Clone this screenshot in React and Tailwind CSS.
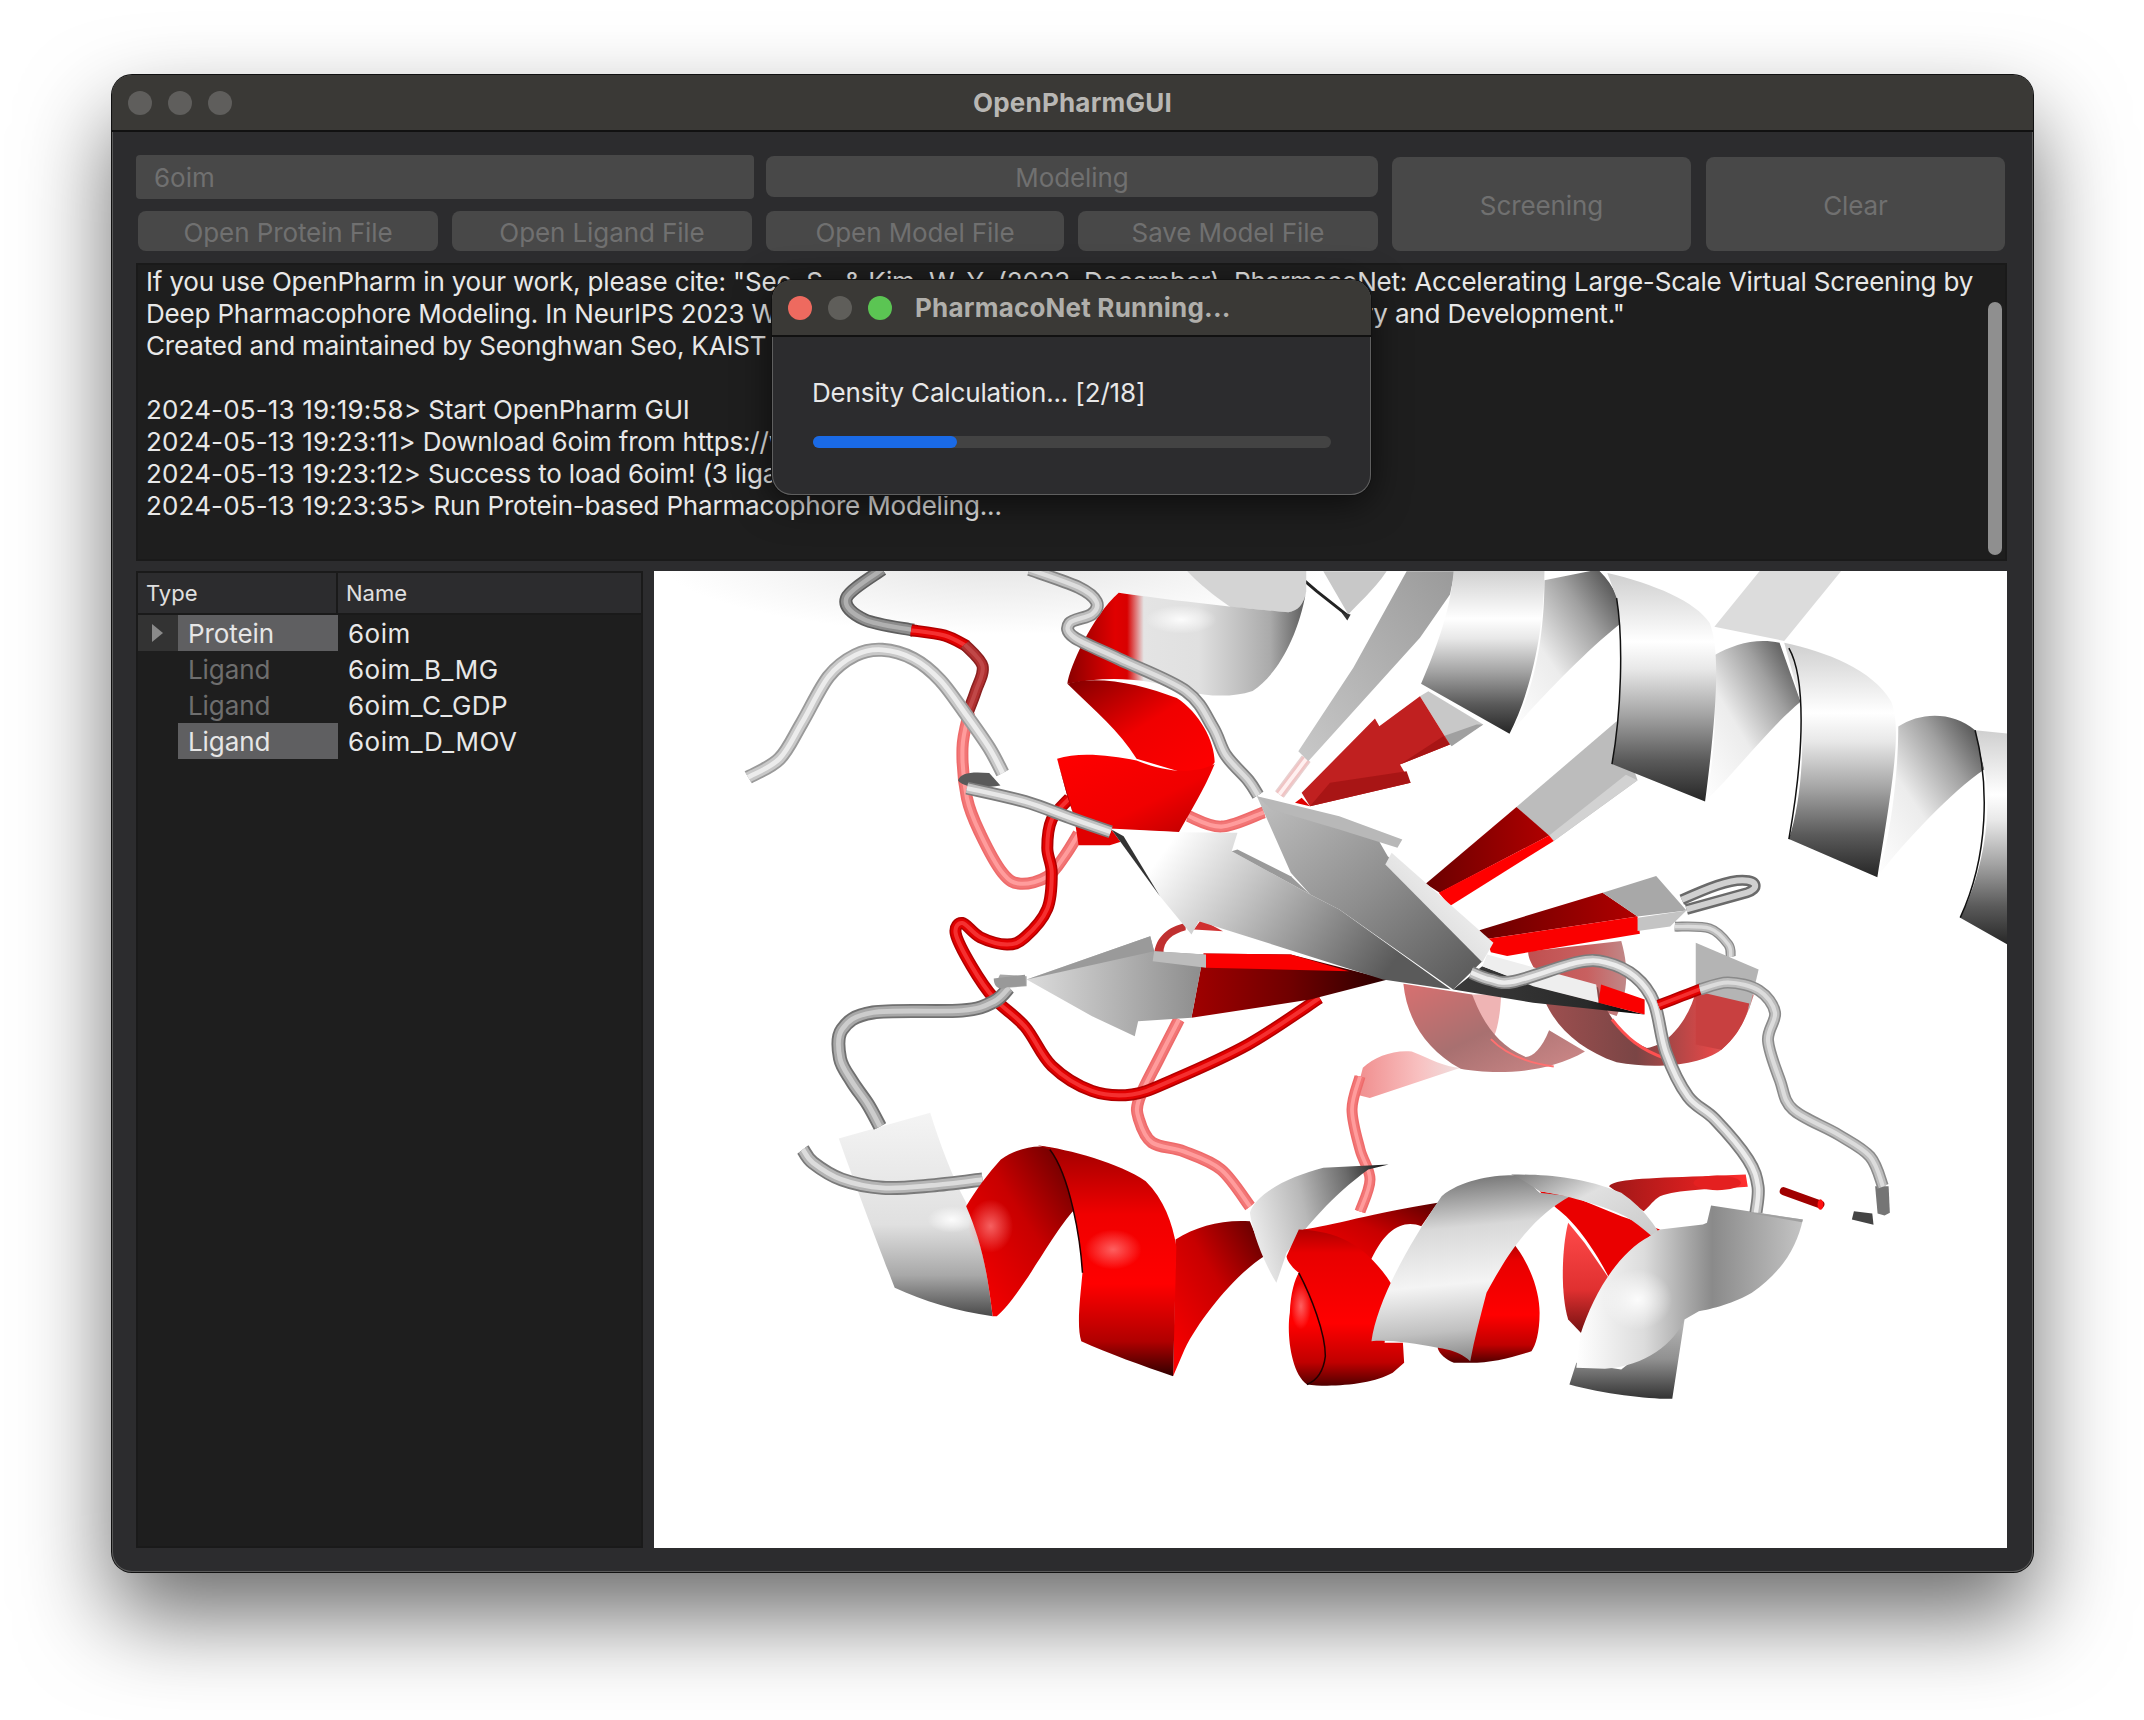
import React from 'react';

// catmull-rom through points, gives smooth tubes
const sm = (p) => {
  let d = `M${p[0][0]},${p[0][1]}`;
  for (let i = 0; i < p.length - 1; i++) {
    const a = p[i - 1] || p[i], b = p[i], c = p[i + 1], e = p[i + 2] || c;
    d += ` C${b[0] + (c[0] - a[0]) / 6},${b[1] + (c[1] - a[1]) / 6} ${c[0] - (e[0] - b[0]) / 6},${c[1] - (e[1] - b[1]) / 6} ${c[0]},${c[1]}`;
  }
  return d;
};

const GRAY = ['#8a8a8a', '#bcbcbc', '#dcdcdc'];
const DGRAY = ['#5e5e5e', '#8c8c8c', '#b0b0b0'];
const RED = ['#b00000', '#e20000', '#f43030'];
const PINK = ['#ee6a6a', '#f27676', '#ff9c9c'];
const DRED = ['#8a2020', '#b03030', '#c04848'];

const Tube = ({ pts, c = GRAY, w = 13, cap = 'butt' }) => (
  <g fill="none" strokeLinecap={cap} strokeLinejoin="round">
    <path d={sm(pts)} stroke={c[0]} strokeWidth={w} vectorEffect="non-scaling-stroke" />
    <path d={sm(pts)} stroke={c[1]} strokeWidth={w * 0.74} vectorEffect="non-scaling-stroke" />
    <path d={sm(pts)} stroke={c[2]} strokeWidth={w * 0.34} vectorEffect="non-scaling-stroke" />
  </g>
);

const Grad = ({ id, x1 = 0, y1 = 0, x2 = 0, y2 = 1, stops }) => (
  <linearGradient id={id} x1={x1} y1={y1} x2={x2} y2={y2}>
    {stops.map(([o, c], i) => <stop key={i} offset={o} stopColor={c} />)}
  </linearGradient>
);

const Glow = ({ id, c, o = 0.95 }) => (
  <radialGradient id={id}>
    <stop offset="0" stopColor={c} stopOpacity={o} />
    <stop offset="1" stopColor={c} stopOpacity="0" />
  </radialGradient>
);

// every group uses the pixel grid of one crop of the structure
const Z5 = (p) => <g transform="translate(650 570) scale(0.4464 0.3571)" {...p} />;
const Z6 = (p) => <g transform="translate(1300 570) scale(0.4656 0.3571)" {...p} />;
const Z7 = (p) => <g transform="translate(760 1080) scale(0.4082 0.3333)" {...p} />;
const Z8 = (p) => <g transform="translate(1360 1080) scale(0.4082 0.3333)" {...p} />;
const Z9 = (p) => <g transform="translate(1000 780) scale(0.4847 0.3333)" {...p} />;
const Z10 = (p) => <g transform="translate(1100 565) scale(0.3333 0.3333)" {...p} />;

const Protein = () => (
  <svg viewBox="654 572 1353 976" className="block w-full h-full">
    <defs>
      <Glow id="fog" c="#e4e4e4" o={1} />
      <Grad id="hFront" stops={[[0, '#cfcfcf'], [0.12, '#e2e2e2'], [0.3, '#ffffff'], [0.42, '#e8e8e8'], [0.62, '#a4a4a4'], [0.82, '#5a5a5a'], [1, '#262626']]} />
      <Grad id="hBack" x1={1} y1={0} x2={0} y2={1} stops={[[0, '#3c3c3c'], [0.3, '#a0a0a0'], [0.6, '#ececec'], [1, '#ffffff']]} />
      <Grad id="flagG" stops={[[0, '#f4f4f4'], [0.55, '#e0e0e0'], [0.8, '#a8a8a8'], [1, '#4a4a4a']]} />
      <Grad id="rFront" stops={[[0, '#a00000'], [0.3, '#f00000'], [0.6, '#ff0000'], [0.85, '#b00000'], [1, '#300000']]} />
      <Grad id="rBack" x1={1} y1={0} x2={0} y2={1} stops={[[0, '#5a0000'], [0.45, '#c80000'], [1, '#ff0000']]} />
      <Grad id="rSide" x1={0} y1={0} x2={1} y2={1} stops={[[0, '#800000'], [0.5, '#f00000'], [1, '#ff0000']]} />
      <Grad id="topBand" x1={0} y1={0} x2={1} y2={0} stops={[[0, '#8a0000'], [0.2, '#e00000'], [0.25, '#d80000'], [0.32, '#e4e4e4'], [0.55, '#e0e0e0'], [0.85, '#aaaaaa'], [1, '#5a5a5a']]} />
      <Grad id="redLump" x1={0} y1={0} x2={0} y2={1} stops={[[0, '#b00000'], [0.15, '#e80000'], [0.6, '#ff0000'], [0.85, '#c00000'], [1, '#500000']]} />
      <Grad id="redBand" x1={0} y1={0} x2={1} y2={1} stops={[[0, '#ff0000'], [0.6, '#f00000'], [1, '#b80000']]} />
      <Grad id="flapG" x1={0} y1={0.5} x2={1} y2={0.3} stops={[[0, '#ececec'], [0.4, '#b8b8b8'], [0.75, '#6a6a6a'], [1, '#1e1e1e']]} />
      <Grad id="arrow1" x1={0} y1={0} x2={1} y2={0.35} stops={[[0, '#ffffff'], [0.18, '#ffffff'], [0.5, '#c0c0c0'], [1, '#5a5a5a']]} />
      <Grad id="arrow2" x1={0} y1={0} x2={1} y2={1} stops={[[0, '#c0c0c0'], [0.5, '#8e8e8e'], [1, '#555555']]} />
      <Grad id="edgeG" x1={1} y1={0} x2={0} y2={1} stops={[[0, '#ffffff'], [0.6, '#e0e0e0'], [1, '#a8a8a8']]} />
      <Grad id="arrow3" x1={0} y1={0} x2={1} y2={0} stops={[[0, '#dcdcdc'], [1, '#8c8c8c']]} />
      <Grad id="darkRed" x1={0} y1={0} x2={1} y2={0} stops={[[0, '#a00000'], [0.5, '#700000'], [1, '#2a0000']]} />
      <Grad id="underG" x1={0} y1={0} x2={1} y2={0} stops={[[0, '#3a3a3a'], [0.7, '#2a2a2a'], [1, '#000000']]} />
      <Grad id="redStrand" x1={0} y1={0} x2={1} y2={0} stops={[[0, '#6a0000'], [1, '#b00000']]} />
      <Grad id="pinkA" x1={0} y1={0} x2={1} y2={1} stops={[[0, '#d87070'], [0.5, '#a87070'], [1, '#d08a8a']]} />
      <Grad id="pinkB" x1={0} y1={0} x2={1} y2={0} stops={[[0, '#a05050'], [0.45, '#7a4545'], [0.8, '#e04848'], [1, '#d08080']]} />
      <Grad id="pinkTop" x1={0} y1={0} x2={1} y2={0} stops={[[0, '#c05050'], [0.6, '#c86060'], [1, '#c08888']]} />
      <Grad id="pinkFlap" x1={0} y1={0} x2={1} y2={0} stops={[[0, '#f08c8c'], [0.6, '#f8c0c0'], [1, '#f0e0e0']]} />
      <Grad id="helixEnd" x1={0} y1={0} x2={1} y2={0} stops={[[0, '#ffffff'], [0.3, '#dcdcdc'], [0.6, '#8a8a8a'], [1, '#c4c4c4']]} />
      <Grad id="helixBase" stops={[[0, '#b8b8b8'], [0.5, '#909090'], [1, '#333333']]} />
      <Grad id="whiteArch" x1={0} y1={0} x2={1} y2={1} stops={[[0, '#7a7a7a'], [0.35, '#e0e0e0'], [1, '#c0c0c0']]} />
      <Grad id="archFront" x1={0.2} y1={0} x2={0.3} y2={1} stops={[[0, '#6a6a6a'], [0.3, '#d8d8d8'], [0.6, '#f4f4f4'], [0.85, '#c0c0c0'], [1, '#8c8c8c']]} />
      <Grad id="lumpL" x1={0} y1={0} x2={0} y2={1} stops={[[0, '#ff4a4a'], [0.6, '#e03030'], [1, '#701010']]} />
      <Grad id="pinkBand" x1={0} y1={0} x2={1} y2={0} stops={[[0, '#a01818'], [0.7, '#e02020'], [1, '#ff3030']]} />
      <Grad id="strand1" x1={1} y1={0} x2={0} y2={1} stops={[[0, '#9a9a9a'], [1, '#c8c8c8']]} />
      <Glow id="glowPink" c="#ff8080" o={0.75} />
      <Glow id="glowWhite" c="#ffffff" o={0.9} />
    </defs>

    <ellipse cx="1000" cy="560" rx="340" ry="75" fill="url(#fog)" />

    {/* faded loops at the back */}
    <Z6>
      <path d="M135,1395 C160,1365 200,1345 240,1350 C280,1370 310,1395 345,1395 L150,1480 L120,1470 Z" fill="url(#pinkFlap)" />
      <path d="M490,1070 L690,1040 C710,1130 700,1200 680,1250 L540,1190 C510,1130 490,1100 490,1070 Z" fill="url(#pinkTop)" />
      <path d="M370,1190 L432,1190 C430,1260 420,1320 400,1340 Z" fill="#efb4b4" />
      <path d="M222,1160 C230,1260 270,1345 345,1398 C400,1412 520,1420 612,1350 L535,1290 C520,1340 500,1365 485,1365 C420,1330 390,1260 370,1190 Z" fill="url(#pinkA)" />
      <path d="M410,1315 C440,1355 480,1380 545,1392" fill="none" stroke="#ff7070" strokeWidth="2" vectorEffect="non-scaling-stroke" />
      <path d="M515,1160 C530,1260 590,1340 680,1380 C760,1400 860,1390 905,1345 C945,1300 960,1250 975,1190 L850,1180 C840,1240 800,1330 745,1340 C690,1310 650,1230 640,1170 Z" fill="url(#pinkB)" />
      <path d="M670,1260 C700,1310 730,1345 790,1372" fill="none" stroke="#ff5050" strokeWidth="3" vectorEffect="non-scaling-stroke" />
    </Z6>
    <Tube w={11} c={PINK} pts={[[1360, 1077], [1352, 1110], [1360, 1150], [1370, 1180], [1360, 1212]]} />
    <Tube w={12} c={PINK} pts={[[1179, 1020], [1159, 1059], [1139, 1100], [1139, 1120], [1152, 1143], [1184, 1152], [1221, 1170], [1250, 1207]]} />
    <Z5>
      <Tube w={12} c={PINK} pts={[[715, 400], [700, 500], [710, 640], [740, 740], [790, 850], [830, 880], [890, 860], [930, 800], [960, 740]]} />
      <Tube w={12} c={PINK} pts={[[1205, 690], [1280, 720], [1375, 680]]} />
      <Tube w={11} c={['#e8d0d0', '#f0c4c4', '#fff0f0']} pts={[[1410, 630], [1440, 580], [1470, 530]]} />
      <Tube w={13} c={DGRAY} pts={[[520, 0], [440, 80], [480, 140], [590, 170]]} />
      <Tube w={12} c={RED} pts={[[585, 170], [660, 185], [710, 215]]} />
      <Tube w={12} c={DRED} pts={[[705, 210], [745, 270], [730, 340], [712, 400]]} />
    </Z5>

    {/* red tube */}
    <Z5>
      <Tube w={12} c={RED} pts={[[940, 640], [900, 700], [890, 780], [900, 850], [890, 950], [840, 1030], [800, 1050], [740, 1030], [700, 990], [685, 1020], [720, 1110], [770, 1200], [840, 1280], [900, 1390], [990, 1460], [1080, 1470], [1170, 1430], [1340, 1330], [1500, 1200]]} />
      <path d="M1130,1070 C1135,1030 1160,1000 1200,990 L1200,1010 C1170,1020 1150,1040 1150,1075 Z" fill="#c03030" />
    </Z5>

    {/* upper helix */}
    <Z10>
      <path d="M670,20 L860,20 C820,80 770,120 745,150 Z" fill="#c8c8c8" />
      <path d="M580,20 L650,80 L745,155" fill="none" stroke="#222" strokeWidth="3" vectorEffect="non-scaling-stroke" />
      <path d="M725,145 L752,150 L742,168 Z" fill="#333" />
    </Z10>
    <Z5>
      <path d="M1200,0 L1470,0 L1470,60 C1465,100 1450,115 1430,120 L1300,105 C1260,70 1230,40 1200,0 Z" fill="#d4d4d4" />
      <path d="M1050,65 C1130,80 1300,105 1430,120 C1450,115 1465,100 1470,60 C1450,200 1400,300 1350,340 C1300,360 1250,355 1200,340 C1100,300 1020,300 935,320 C938,280 990,130 1050,65 Z" fill="url(#topBand)" />
      <ellipse cx="1190" cy="140" rx="80" ry="40" fill="url(#glowWhite)" />
      <path d="M935,320 C1000,295 1100,320 1180,360 C1230,400 1265,480 1265,540 C1250,570 1225,575 1210,575 L1090,530 C1050,450 1000,400 935,320 Z" fill="url(#rSide)" />
      <path d="M950,690 L960,772 L1030,772 L1060,760 L1030,725 Z" fill="#e00000" />
      <path d="M912,530 C960,510 1030,520 1090,535 C1140,560 1210,580 1265,545 C1240,620 1210,680 1185,735 L1030,725 L950,692 L935,635 Z" fill="url(#redBand)" />
      <path d="M912,530 L950,692 L935,635 Z" fill="#a00000" />
      <Tube w={13} c={['#808080', '#bcbcbc', '#dedede']} pts={[[850, 0], [960, 50], [1000, 90], [990, 125], [940, 150], [950, 190], [1050, 250], [1200, 340], [1260, 440], [1290, 520], [1340, 590], [1362, 632]]} />
      <Tube w={14} c={['#9a9a9a', '#c8c8c8', '#ececec']} pts={[[220, 582], [290, 530], [340, 430], [400, 300], [460, 240], [520, 225], [590, 250], [650, 310], [710, 410], [760, 500], [790, 570]]} />
      <path d="M690,590 C695,570 720,565 760,570 L785,605 C740,615 700,610 690,590 Z" fill="#5a5a5a" />
      <Tube w={13} c={['#7c7c7c', '#c0c0c0', '#e8e8e8']} pts={[[710, 612], [840, 650], [940, 695], [1032, 735]]} />
    </Z5>

    {/* right helix */}
    <Z10>
      <path d="M920,20 L1065,20 L1050,90 L960,220 L625,590 L595,560 L760,310 Z" fill="url(#strand1)" />
      <path d="M960,395 L985,380 L1150,480 L1050,540 Z" fill="#c8c8c8" />
      <path d="M1130,480 L1150,480 L1055,545 L1030,515 Z" fill="#a0a0a0" />
      <path d="M605,685 L825,462 L838,485 L960,395 L1050,540 L900,600 L932,655 L630,725 Z" fill="#c02020" />
      <path d="M630,725 L690,655 L920,620 L932,655 Z" fill="#a81515" />
      <path d="M900,600 L1050,540 L1030,515 Z" fill="#a81515" />
      <path d="M585,715 L605,700 L630,725 Z" fill="#e00000" />
    </Z10>
    <Z6>
      <path d="M990,0 L1165,0 L1040,200 L890,160 Z" fill="#dcdcdc" />
      <path d="M525,30 L640,0 C680,50 695,110 690,150 C630,210 530,340 450,460 C490,380 525,230 525,30 Z" fill="url(#hBack)" />
      <path d="M330,0 L525,0 C525,190 490,360 450,460 L260,320 C300,200 325,100 330,0 Z" fill="url(#hFront)" />
      <path d="M465,665 L680,425 L725,590 L545,760 Z" fill="#bcbcbc" />
      <path d="M535,745 L700,575 L725,590 L545,760 Z" fill="#d2d2d2" />
      <path d="M270,880 L465,665 L535,745 L300,905 Z" fill="url(#redStrand)" />
      <path d="M298,905 L535,745 L545,760 L322,942 Z" fill="#ff0000" />
      <path d="M890,240 C930,210 980,190 1030,205 L1075,370 C1010,440 940,560 870,650 C890,550 895,400 890,240 Z" fill="url(#hBack)" />
      <path d="M660,10 C760,40 850,90 880,150 C900,220 900,350 870,650 L670,545 C690,400 695,200 680,80 Z" fill="url(#hFront)" />
      <path d="M1285,440 C1330,400 1400,395 1450,450 L1470,560 C1400,620 1300,760 1240,860 C1270,750 1285,560 1285,440 Z" fill="url(#hBack)" />
      <path d="M1040,205 C1130,230 1230,280 1270,370 C1290,440 1280,550 1240,862 L1050,755 C1075,660 1085,500 1075,370 Z" fill="url(#hFront)" />
      <path d="M1450,450 L1522,460 L1522,1052 L1418,975 C1460,870 1490,700 1470,560 Z" fill="url(#hFront)" />
      <path d="M680,80 C695,200 690,400 670,545" fill="none" stroke="#111" strokeWidth="1.5" vectorEffect="non-scaling-stroke" />
      <path d="M1050,220 C1085,300 1085,500 1050,755" fill="none" stroke="#111" strokeWidth="1.5" vectorEffect="non-scaling-stroke" />
      <path d="M1450,450 C1480,600 1480,800 1418,975" fill="none" stroke="#111" strokeWidth="1.5" vectorEffect="non-scaling-stroke" />

      {/* small strand on the right */}
      <path d="M820,925 C880,890 920,870 950,870 C985,870 985,895 960,905 L830,952" fill="none" stroke="#6a6a6a" strokeWidth="11" vectorEffect="non-scaling-stroke" />
      <path d="M820,925 C880,890 920,870 950,870 C985,870 985,895 960,905 L830,952" fill="none" stroke="#d0d0d0" strokeWidth="6" vectorEffect="non-scaling-stroke" />
      <path d="M385,1010 L650,905 L725,972 L400,1035 Z" fill="url(#redStrand)" />
      <path d="M400,1035 L725,972 L730,1020 L445,1082 L410,1072 Z" fill="#fa0000" />
      <path d="M650,905 L765,858 L830,955 L725,972 Z" fill="#a8a8a8" />
      <path d="M725,975 L830,955 L795,1000 L725,1012 Z" fill="#c4c4c4" />
      <Tube w={10} pts={[[805, 1000], [880, 1005], [920, 1050], [925, 1085]]} />
      <path d="M850,1045 L985,1120 L965,1230 L850,1180 Z" fill="#b4b4b4" />
      <path d="M850,1180 L965,1215 C960,1250 945,1300 905,1345 L850,1330 Z" fill="#c84040" />
    </Z6>

    {/* bottom helix, red and grey */}
    <Z7>
      <path d="M193,177 L417,100 C440,190 470,290 505,370 C540,480 555,560 570,710 C480,695 400,665 330,625 C300,530 240,340 193,177 Z" fill="url(#flagG)" />
      <ellipse cx="470" cy="420" rx="60" ry="40" fill="url(#glowWhite)" />
      <Tube w={14} c={['#7a7a7a', '#b4b4b4', '#dcdcdc']} pts={[[105, 210], [130, 250], [200, 300], [300, 325], [420, 318], [545, 300]]} />
      <path d="M1018,480 C1070,440 1130,420 1200,425 L1235,530 C1170,580 1080,710 1040,810 L1012,890 Z" fill="url(#rBack)" />
      <path d="M505,380 C530,330 560,280 590,240 C630,205 680,195 710,205 C750,290 770,340 775,385 C720,450 640,650 580,710 L570,710 C555,560 540,480 505,380 Z" fill="url(#rBack)" />
      <ellipse cx="565" cy="440" rx="55" ry="80" fill="url(#glowPink)" />
      <path d="M680,197 C760,210 880,250 945,305 C990,360 1010,430 1020,500 L1012,890 C940,860 850,820 787,785 C775,740 785,650 790,580 C785,480 760,290 710,210 Z" fill="url(#rFront)" />
      <ellipse cx="865" cy="510" rx="70" ry="60" fill="url(#glowPink)" />
      <path d="M710,210 C760,290 785,480 790,580" fill="none" stroke="#200" strokeWidth="1.5" vectorEffect="non-scaling-stroke" />
      <path d="M1200,400 C1215,340 1300,290 1380,265 L1540,255 L1490,270 C1400,350 1340,440 1290,520 L1265,610 C1240,560 1210,480 1200,400 Z" fill="url(#flapG)" />
      <path d="M1330,450 C1400,440 1500,400 1660,370 L1620,440 C1580,420 1530,440 1490,560 Z" fill="url(#rBack)" />
      <path d="M1320,450 C1400,455 1480,480 1550,620 L1530,790 L1575,790 L1578,850 L1550,880 C1500,915 1400,925 1340,915 C1300,880 1290,760 1298,700 C1300,640 1310,600 1320,580 C1300,560 1290,540 1290,530 Z" fill="url(#redLump)" />
      <ellipse cx="1325" cy="680" rx="25" ry="70" fill="url(#glowPink)" />
      <path d="M1320,580 C1350,650 1385,760 1385,830 C1380,880 1360,905 1340,915" fill="none" stroke="#200" strokeWidth="1.5" vectorEffect="non-scaling-stroke" />
    </Z7>
    <Z8>
      <path d="M610,320 C620,300 700,295 840,290 L945,285 L950,322 C850,330 780,330 735,350 C720,360 710,380 695,395 Z" fill="url(#pinkBand)" />
      <ellipse cx="875" cy="310" rx="58" ry="22" fill="#e42020" />
      <path d="M375,490 C420,560 440,640 440,700 C440,760 430,800 420,815 C370,835 320,850 270,850 L230,850 C210,840 195,825 190,805 L280,700 Z" fill="url(#redLump)" />
      <path d="M510,430 C495,500 490,640 510,720 L545,765 L612,600 L550,490 Z" fill="url(#lumpL)" />
      <path d="M440,335 L520,350 L640,410 L735,450 L710,470 C670,510 640,560 612,600 C580,520 530,430 480,385 Z" fill="#ea0000" />
      <path d="M28,785 C40,680 100,530 200,350 C250,300 330,285 390,288 C420,310 430,330 440,340 L515,350 C440,400 380,480 310,640 C295,710 280,780 270,845 C240,810 190,805 190,805 C130,790 70,780 28,785 Z" fill="url(#archFront)" />
      <path d="M370,285 C450,285 540,290 640,340 C700,390 740,460 770,550 C740,490 690,440 650,410 C610,385 520,350 440,335 C420,320 400,300 370,285 Z" fill="url(#whiteArch)" />
      <path d="M530,850 L640,870 L795,720 L765,958 C720,960 600,945 513,915 Z" fill="url(#helixBase)" />
      <path d="M540,765 C570,650 630,520 710,470 L735,450 L840,435 L850,430 L860,378 L1085,420 C1070,500 1040,570 960,640 C920,670 860,690 830,695 L795,720 C770,790 700,860 600,868 L530,865 Z" fill="url(#helixEnd)" />
      <ellipse cx="680" cy="660" rx="85" ry="90" fill="url(#glowWhite)" />
      <path d="M970,400 L1085,420 L1083,428 L960,402 Z" fill="#a0a0a0" />
      <path d="M1262,320 L1295,320 L1298,400 L1285,408 L1268,402 Z" fill="#757575" />
      <path d="M1038,335 L1128,375" stroke="#a00000" strokeWidth="8" vectorEffect="non-scaling-stroke" strokeLinecap="round" />
      <ellipse cx="1128" cy="375" rx="7" ry="16" fill="#ff1010" />
      <path d="M1210,395 L1255,402 L1258,436 L1205,420 Z" fill="#444" />
    </Z8>

    {/* central sheet */}
    <Z9>
      <path d="M420,522 L600,525 L800,600 L640,660 L395,715 Z" fill="url(#darkRed)" />
      <path d="M420,522 L600,525 L720,575 L425,565 Z" fill="#fa0000" />
      <path d="M55,600 L310,470 L318,515 L420,525 L395,715 L285,725 L278,770 L190,710 Z" fill="url(#arrow3)" />
      <path d="M55,600 L310,470 L318,515 Z" fill="#9a9a9a" />
      <path d="M318,515 L425,525 L425,565 L315,545 Z" fill="#bcbcbc" />
      <path d="M0,585 L55,590 L55,620 L15,625 C0,625 -10,610 0,585 Z" fill="#a8a8a8" />
      <path d="M415,420 L460,455 L400,450 Z" fill="#d03030" />
      <path d="M230,150 L370,158 L490,160 L478,215 L640,345 L700,390 L930,630 L790,600 L410,425 L395,465 L330,350 Z" fill="url(#arrow1)" />
      <path d="M478,215 L640,345 L600,290 L490,210 Z" fill="#9a9a9a" />
      <path d="M230,150 L255,170 L330,350 Z" fill="#333" />
      <path d="M935,630 L995,560 L1105,620 L1330,705 L1100,670 Z" fill="url(#underG)" />
      <path d="M1005,525 L1230,615 L1235,670 L1100,620 L995,560 Z" fill="#eeeeee" />
      <path d="M1240,615 L1330,660 L1330,705 L1235,670 Z" fill="#fa0000" />
      <path d="M530,50 L780,180 L800,230 L960,460 L995,545 L935,630 L700,390 L640,345 L600,280 Z" fill="url(#arrow2)" />
      <path d="M530,50 L700,110 L830,180 L820,205 L700,150 L560,90 Z" fill="#b8b8b8" />
      <path d="M795,255 L808,220 L1018,490 L995,548 Z" fill="url(#edgeG)" />
    </Z9>

    {/* tubes in front, in page pixels */}
    <Tube w={13} c={['#7c7c7c', '#c0c0c0', '#ececec']} pts={[[1471, 973], [1490, 980], [1514, 982], [1577, 963], [1606, 963], [1635, 977], [1654, 1003], [1666, 1053], [1688, 1097], [1715, 1120], [1748, 1160], [1758, 1187], [1756, 1213]]} />
    <Tube w={14} c={['#707070', '#a8a8a8', '#cccccc']} pts={[[1009, 988], [994, 1002], [962, 1011], [873, 1013], [842, 1030], [840, 1059], [852, 1082], [868, 1105], [880, 1127]]} />
    <Z5>
      <path d="M770,1145 L840,1135 L842,1165 L800,1170 C785,1180 770,1170 770,1145 Z" fill="#999" />
    </Z5>
    <Z6>
      <Tube w={11} c={RED} pts={[[770, 1220], [820, 1195], [865, 1172]]} />
    </Z6>
    <Tube w={12} pts={[[1700, 990], [1728, 983], [1759, 991], [1775, 1013], [1768, 1041], [1780, 1081], [1793, 1110], [1838, 1135], [1870, 1157], [1883, 1187]]} />
  </svg>
);

const Btn = ({ className = '', children }) => (
  <div className={`flex items-center justify-center rounded-[8px] bg-[#484848] text-[#707070] pt-[2px] tracking-[-0.1px] ${className}`}>{children}</div>
);

const Dot = ({ color }) => <div className={`w-[24px] h-[24px] rounded-full ${color}`} />;

const CITE = [
  'If you use OpenPharm in your work, please cite: "Seo, S., & Kim, W. Y. (2023, December). PharmacoNet: Accelerating Large-Scale Virtual Screening by',
  'Deep Pharmacophore Modeling. In NeurIPS 2023 Workshop on New Frontiers of AI for Drug Discovery and Development."',
  'Created and maintained by Seonghwan Seo, KAIST',
  '\u00a0',
];

const LOG = [
  ['2024-05-13 19:19:58>', 'Start OpenPharm GUI'],
  ['2024-05-13 19:23:11>', 'Download 6oim from https://www.rcsb.org/structure/6oim'],
  ['2024-05-13 19:23:12>', 'Success to load 6oim! (3 ligands)'],
  ['2024-05-13 19:23:35>', 'Run Protein-based Pharmacophore Modeling...'],
];

const ROWS = [
  { type: 'Protein', name: '6oim', sel: true, arrow: true },
  { type: 'Ligand', name: '6oim_B_MG' },
  { type: 'Ligand', name: '6oim_C_GDP' },
  { type: 'Ligand', name: '6oim_D_MOV', sel: true },
];

const Row = ({ type, name, sel, arrow }) => (
  <div className="flex h-[36px] items-center">
    <div className={`w-[40px] h-full flex items-center pl-[14px] ${arrow ? 'bg-[#333333]' : ''}`}>
      {arrow && (
        <svg width="11" height="18" viewBox="0 0 11 18"><path d="M0,0 L11,9 L0,18 Z" fill="#8a8a8a" /></svg>
      )}
    </div>
    <div className={`w-[160px] h-full flex items-center pl-[10px] tracking-[-0.1px] ${sel ? 'bg-[#5f5f61] text-[#e6e6e6]' : 'text-[#6e6e6e]'}`}>{type}</div>
    <div className="pl-[10px] text-[#e8e8e8] tracking-[0.5px]">{name}</div>
  </div>
);

export default function App() {
  return (
    <div className="w-[2144px] h-[1720px] overflow-hidden bg-white pl-[112px] pt-[75px] text-[26px] font-['Inter','Liberation_Sans',sans-serif]">
      <div className="relative flex flex-col w-[1921px] h-[1497px] rounded-[20px] bg-[#2c2c2e] shadow-[0_0_0_1px_#111111,inset_0_0_0_1px_#5a5a5a,0_44px_90px_rgba(0,0,0,0.58)]">
        <div className="flex items-center h-[57px] rounded-t-[20px] bg-[#3a3936] border-b-2 border-[#111111] px-[16px]">
          <div className="flex-1 flex gap-[16px]">
            <Dot color="bg-[#5f5e5c]" />
            <Dot color="bg-[#5f5e5c]" />
            <Dot color="bg-[#5f5e5c]" />
          </div>
          <div className="font-bold text-[#b8b7b4] tracking-[0.2px]">OpenPharmGUI</div>
          <div className="flex-1" />
        </div>

        <div className="flex-1 flex flex-col pl-[24px] pr-[26px] pt-[23px] pb-[24px] min-h-0">
          <div className="flex h-[96px]">
            <div className="w-[618px] flex flex-col gap-[12px]">
              <div className="h-[44px] rounded-[4px] bg-[#484848] text-[#707070] flex items-center pl-[18px]">6oim</div>
              <div className="flex gap-[14px] px-[2px]">
                <Btn className="w-[300px] h-[40px]">Open Protein File</Btn>
                <Btn className="w-[300px] h-[40px]">Open Ligand File</Btn>
              </div>
            </div>
            <div className="w-[612px] ml-[12px] flex flex-col gap-[14px] pt-[1px]">
              <Btn className="h-[41px]">Modeling</Btn>
              <div className="flex gap-[14px]">
                <Btn className="w-[298px] h-[40px]">Open Model File</Btn>
                <Btn className="w-[300px] h-[40px]">Save Model File</Btn>
              </div>
            </div>
            <Btn className="w-[299px] ml-[14px] mt-[2px]">Screening</Btn>
            <Btn className="w-[299px] ml-[15px] mt-[2px]">Clear</Btn>
          </div>

          <div className="relative mt-[12px] h-[298px] bg-[#1e1e1e] border-2 border-[#1a1a1a] pl-[8px] pt-[1px] text-[#e8e8e8] leading-[32px] tracking-[-0.18px] overflow-hidden">
            {CITE.map((line, i) => <div key={i} className="whitespace-nowrap">{line}</div>)}
            {LOG.map(([stamp, msg]) => (
              <div key={stamp} className="whitespace-nowrap">
                <span className="tracking-[0.15px]">{stamp}</span> {msg}
              </div>
            ))}
            <div className="absolute right-[3px] top-[37px] w-[14px] h-[253px] rounded-full bg-[#8f8f8f]" />
          </div>

          <div className="flex-1 flex gap-[11px] mt-[10px] min-h-0">
            <div className="w-[507px] flex flex-col bg-[#1e1e1e] border-2 border-[#1a1a1a]">
              <div className="flex h-[42px] bg-[#2c2c2e] border-b-2 border-[#1a1a1a] text-[22px] text-[#e0e0e0]">
                <div className="w-[200px] flex items-center pl-[8px] border-r-2 border-[#1a1a1a]">Type</div>
                <div className="flex items-center pl-[8px]">Name</div>
              </div>
              {ROWS.map((r) => <Row key={r.name} {...r} />)}
            </div>
            <div className="flex-1 bg-white min-w-0">
              <Protein />
            </div>
          </div>
        </div>

        {/* progress dialog */}
        <div className="absolute left-[660px] top-[205px] w-[599px] h-[215px] flex flex-col rounded-[20px] bg-[#2c2c2e] shadow-[0_0_0_1px_#111111,inset_0_0_0_1px_#5f5f5f,0_8px_36px_rgba(0,0,0,0.6)]">
          <div className="flex items-center gap-[16px] h-[57px] pl-[16px] rounded-t-[20px] bg-[#3a3936] border-b-2 border-[#111111]">
            <Dot color="bg-[#ee6a5f]" />
            <Dot color="bg-[#5f5e5a]" />
            <Dot color="bg-[#5bc553]" />
            <div className="ml-[7px] font-bold text-[#b0afab] tracking-[0.2px]">PharmacoNet Running...</div>
          </div>
          <div className="pl-[40px] pr-[41px] pt-[40px]">
            <div className="text-[#e8e8e8] leading-[32px] tracking-[-0.15px]">Density Calculation... [2/18]</div>
            <div className="mt-[27px] ml-[1px] w-[518px] h-[12px] rounded-full bg-[#434343]">
              <div className="w-[144px] h-full rounded-full bg-[#1a6ae6]" />
            </div>
          </div>
        </div>
      </div>
    </div>
  );
}
